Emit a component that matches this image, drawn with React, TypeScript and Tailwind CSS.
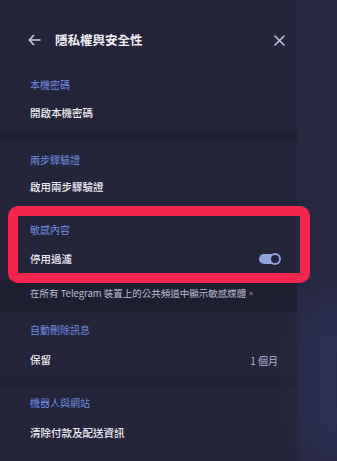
const font = { fontFamily: '"Noto Sans CJK TC", "Noto Sans", sans-serif' };

function SectionLabel({ text, className = "" }: { text: string; className?: string }) {
  return (
    <div className={`h-[10px] pl-[30px] text-[10px] leading-[10px] text-[#6f8de0] ${className}`}>{text}</div>
  );
}

function Row({ text, right, className = "" }: { text: string; right?: React.ReactNode; className?: string }) {
  return (
    <div className={`h-[28px] flex items-center justify-between pl-[30px] pr-[15px] ${className}`}>
      <span className="text-[10.5px] font-medium text-[#ececf4]">{text}</span>
      {right}
    </div>
  );
}

function Toggle() {
  return (
    <div className="relative w-[22px] h-[12px] mr-[1px]">
      <div className="absolute left-0 top-[1px] w-[20px] h-[10px] rounded-full bg-[#8fa3da]" />
      <div className="absolute right-0 top-0 w-[12px] h-[12px] rounded-full bg-[#23233a] border-2 border-[#8fa3da]" />
    </div>
  );
}

export default function App() {
  return (
    <div className="relative w-[337px] h-[461px] overflow-hidden bg-[#272943] flex" style={font}>
      <div className="w-[297px] h-full bg-[#24243a] flex flex-col">
        <div className="h-[80px] flex items-center pl-[28px] pr-[12px]">
          <svg width="13" height="12" viewBox="0 0 13 12" fill="none" stroke="#c9cde2" strokeWidth="1.6" strokeLinecap="round" strokeLinejoin="round">
            <path d="M12 6H1.5M5.5 1.5L1.2 6l4.3 4.5" />
          </svg>
          <span className="ml-[14px] text-[12.5px] font-semibold text-[#f0f0f6]">隱私權與安全性</span>
          <svg className="ml-auto" width="11" height="11" viewBox="0 0 11 11" fill="none" stroke="#b9bfdc" strokeWidth="1.6" strokeLinecap="round">
            <path d="M1 1l9 9M10 1L1 10" />
          </svg>
        </div>

        <SectionLabel text="本機密碼" />
        <Row text="開啟本機密碼" className="mt-[9px]" />
        <div className="mt-[4px] h-[9px] bg-[#1f1f32]" />

        <SectionLabel text="兩步驟驗證" className="mt-[15px]" />
        <Row text="啟用兩步驟驗證" className="mt-[8px]" />

        <SectionLabel text="敏感內容" className="mt-[24px]" />
        <Row text="停用過濾" className="mt-[10px]" right={<Toggle />} />
        <div className="mt-[7px] h-[32px] bg-[#1f1f32] pl-[30px] pt-[8px] text-[9.5px] leading-[10px] text-[#b9bdd2]">
          在所有 Telegram 裝置上的公共頻道中顯示敏感媒體。
        </div>

        <SectionLabel text="自動刪除訊息" className="mt-[13px]" />
        <Row text="保留" className="mt-[11px]" right={<span className="text-[10px] text-[#b3bbdb] mr-[4px]">1 個月</span>} />
        <div className="mt-[3px] h-[9px] bg-[#212135]" />

        <SectionLabel text="機器人與網站" className="mt-[12px]" />
        <Row text="清除付款及配送資訊" className="mt-[11px]" />
      </div>

      <div className="absolute left-[300px] top-[300px] w-[60px] h-[160px] rounded-full bg-[#33396a] opacity-40 blur-lg" />

      <div className="absolute left-[8px] top-[206px] w-[302px] h-[77px] rounded-[10px] border-[10px] border-[#f4264e]" />
    </div>
  );
}
